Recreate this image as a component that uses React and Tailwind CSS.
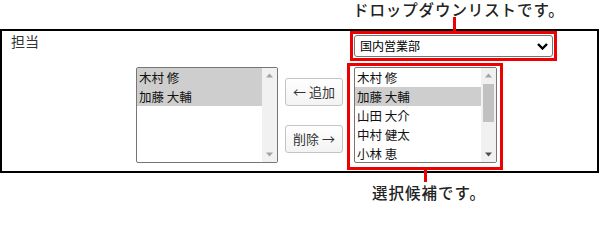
import React from "react";

const FONT = { fontFamily: '"Noto Sans CJK JP", "Noto Sans", sans-serif' };

function UpArrow({ color }) {
  return (
    <svg width="15" height="15" viewBox="0 0 15 15" className="block">
      <polygon points="4,9.5 11,9.5 7.5,5.5" fill={color} />
    </svg>
  );
}
function DownArrow({ color }) {
  return (
    <svg width="15" height="15" viewBox="0 0 15 15" className="block">
      <polygon points="4,5.5 11,5.5 7.5,9.5" fill={color} />
    </svg>
  );
}

function ListBox({ items, selected, width, thumb }) {
  return (
    <div
      className={`flex h-[96px] overflow-hidden rounded-[2px] border border-[#767676] bg-white ${width}`}
    >
      <div className="flex-1 overflow-hidden">
        {items.map((it, i) => (
          <div
            key={it}
            className={`h-[19px] px-[2px] text-[12.5px] leading-[19px] text-[#111] whitespace-nowrap ${
              selected.includes(i) ? "bg-[#cecece]" : ""
            }`}
          >
            {it}
          </div>
        ))}
      </div>
      <div className="flex w-[15px] flex-col bg-[#f1f1f1]">
        <UpArrow color="#a3a3a3" />
        <div className="flex-1 px-[2px] pt-[1px]">
          {thumb && <div className="h-[38px] w-full bg-[#c1c1c1]" />}
        </div>
        <DownArrow color={thumb ? "#505050" : "#a3a3a3"} />
      </div>
    </div>
  );
}

function Btn({ children }) {
  return (
    <div className="flex h-[28px] w-[58px] items-center justify-center rounded-[3px] border border-[#c4c4c4] bg-gradient-to-b from-white to-[#f3f3f3] text-[13px] text-[#333]">
      {children}
    </div>
  );
}

export default function App() {
  return (
    <div className="relative h-[203px] w-[600px] overflow-hidden bg-white" style={FONT}>
      {/* main box */}
      <div className="mt-[29px] flex h-[144px] w-[599px] flex-col border-2 border-black">
        <div className="flex">
          <div className="w-[352px] pl-[9px] text-[14px] leading-[20px] text-[#333]">担当</div>
          <div className="mt-[4px] flex h-[22px] w-[199px] items-center justify-between rounded-[3px] border border-[#767676] bg-white pl-[5px] pr-[4px] text-[12px] text-black">
            <span>国内営業部</span>
            <svg width="11" height="7" viewBox="0 0 11 7" className="block">
              <polyline points="1,1 5.5,5.5 10,1" fill="none" stroke="#000" strokeWidth="2.4" />
            </svg>
          </div>
        </div>
        <div className="mt-[10px] flex pl-[134px]">
          <ListBox items={["木村 修", "加藤 大輔"]} selected={[0, 1]} width="w-[142px]" />
          <div className="ml-[7px] flex flex-col gap-[19px] pt-[11px]">
            <Btn>← 追加</Btn>
            <Btn>削除 →</Btn>
          </div>
          <div className="ml-[11px]">
            <ListBox
              items={["木村 修", "加藤 大輔", "山田 大介", "中村 健太", "小林 恵"]}
              selected={[1]}
              width="w-[143px]"
              thumb
            />
          </div>
        </div>
      </div>

      {/* annotations */}
      <div className="absolute left-[353px] top-[1px] text-[15.5px] font-medium leading-[16px] tracking-[0.9px] text-[#222] whitespace-nowrap">
        ドロップダウンリストです。
      </div>
      <div className="absolute left-[453px] top-[17px] h-[14px] w-[3px] bg-[#ee0000]" />
      <div className="absolute left-[350px] top-[31px] h-[30px] w-[207px] border-[3px] border-[#ee0000]" />
      <div className="absolute left-[347px] top-[63px] h-[107px] w-[156px] border-[3px] border-[#ee0000]" />
      <div className="absolute left-[424px] top-[170px] h-[12px] w-[3px] bg-[#ee0000]" />
      <div className="absolute left-[372px] top-[182px] text-[15.5px] font-medium leading-[20px] tracking-[1px] text-[#222] whitespace-nowrap">
        選択候補です。
      </div>
    </div>
  );
}
